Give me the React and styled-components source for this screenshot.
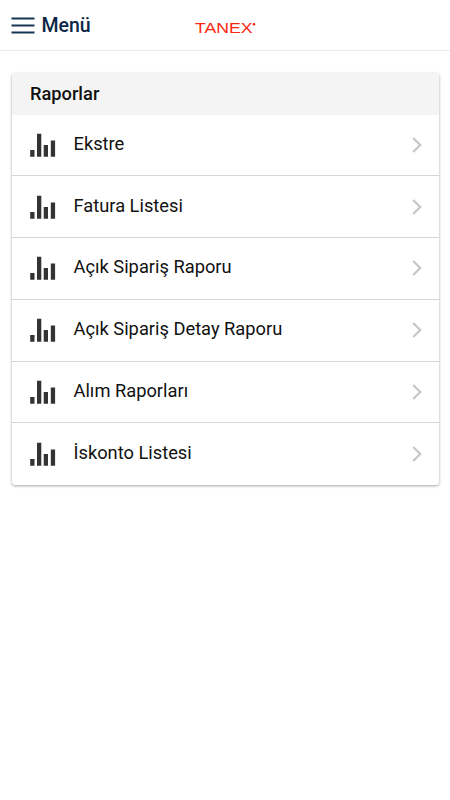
import styled, { createGlobalStyle } from "styled-components";

const GlobalStyle = createGlobalStyle`
    * {
        box-sizing: border-box;
    }

    body {
        margin: 0;
        background: #ffffff;
        font-family: Roboto, "Liberation Sans", sans-serif;
    }
`;

const Page = styled.div`
    min-height: 100vh;
    background: #ffffff;
`;

const TopBar = styled.header`
    display: grid;
    grid-template-columns: 1fr 62px 1fr;
    align-items: center;
    height: 51px;
    padding: 0 11px;
    border-bottom: 1px solid #ebebeb;
`;

const MenuButton = styled.button`
    display: flex;
    align-items: center;
    gap: 6.5px;
    padding: 1px 0 0;
    border: 0;
    background: none;
    color: #0b2745;
    font: 500 19.5px/24px Roboto, "Liberation Sans", sans-serif;
    cursor: pointer;
`;

const Logo = styled.svg`
    display: block;
    width: 62px;
    height: 22px;
    margin-top: 3px;
    overflow: visible;
    fill: #f9250f;
    font-family: "Liberation Sans", sans-serif;
`;

const Card = styled.section`
    margin: 21.5px 11px 0 11.5px;
    border-radius: 3px;
    overflow: hidden;
    background: #ffffff;
    box-shadow: 0 1px 3px rgba(0, 0, 0, 0.36);
`;

const CardTitle = styled.h2`
    height: 42px;
    margin: 0;
    padding: 0 18.4px;
    background: #f4f4f4;
    color: #111111;
    font-size: 18.3px;
    font-weight: 500;
    line-height: 42px;
`;

const List = styled.ul`
    margin: 0;
    padding: 0;
    list-style: none;
`;

const Row = styled.li`
    display: flex;
    align-items: center;
    height: 61.8px;
    padding: 0 17.5px 0 18px;
    border-bottom: 1px solid #d6d6d6;
    cursor: pointer;

    &:last-child {
        border-bottom: 0;
    }
`;

const Label = styled.span`
    flex: 1;
    margin-left: 18px;
    padding-bottom: 2px;
    color: #111111;
    font-size: 18.3px;
    line-height: 24px;
`;

const reports = [
    "Ekstre",
    "Fatura Listesi",
    "Açık Sipariş Raporu",
    "Açık Sipariş Detay Raporu",
    "Alım Raporları",
    "İskonto Listesi",
];

function MenuIcon() {
    return (
        <svg width="24" height="18" viewBox="0 0 24 18" stroke="#173451" strokeWidth="2">
            <path d="M.5 1.5h23M.5 8.5h23M.5 15.5h23" />
        </svg>
    );
}

function ChartIcon() {
    return (
        <svg width="26" height="24" viewBox="0 0 26 24" fill="#333333">
            <path d="M.2 17h4.3v6.7H.2zM7 .8h4.3v22.9H7zM13.7 12H18v11.7h-4.3zM20.8 7.5h4.3v16.2h-4.3z" />
        </svg>
    );
}

function ChevronIcon() {
    return (
        <svg width="10" height="16" viewBox="0 0 10 16" fill="none" stroke="#c7c7c7" strokeWidth="2.3">
            <path d="m1.2 1 7 7-7 7" />
        </svg>
    );
}

export default function App() {
    return (
        <>
            <GlobalStyle />
            <Page>
                <TopBar>
                    <MenuButton type="button">
                        <MenuIcon />
                        Menü
                    </MenuButton>
                    <Logo viewBox="0 0 62 22">
                        <text x="1" y="16.8" fontSize="14.2" textLength="57.5" lengthAdjust="spacingAndGlyphs">
                            TANEX
                        </text>
                        <circle cx="60" cy="8.2" r="1.3" />
                    </Logo>
                </TopBar>
                <Card>
                    <CardTitle>Raporlar</CardTitle>
                    <List>
                        {reports.map((name) => (
                            <Row key={name}>
                                <ChartIcon />
                                <Label>{name}</Label>
                                <ChevronIcon />
                            </Row>
                        ))}
                    </List>
                </Card>
            </Page>
        </>
    );
}
